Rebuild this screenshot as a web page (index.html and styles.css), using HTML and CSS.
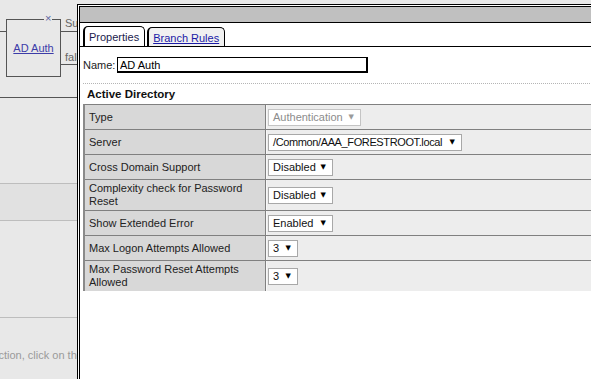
FILE: index.html
```html
<!DOCTYPE html>
<html lang="en">
<head>
    <meta charset="UTF-8">
    <meta name="viewport" content="width=device-width, initial-scale=1.0">
    <title>AD Auth Properties</title>
    <link rel="stylesheet" href="styles.css">
</head>
<body>
<div class="page">
    <aside class="workspace">
        <div class="canvas">
            <span class="wire wire-in"></span>
            <div class="node">
                <span class="node-close">&times;</span>
                <a href="#">AD Auth</a>
            </div>
            <span class="wire wire-ok"></span>
            <span class="branch branch-ok">Successful</span>
            <span class="wire wire-fail"></span>
            <span class="branch branch-fail">fallback</span>
        </div>
        <div class="band"></div>
        <div class="hint">To add an action, click on the plus sign</div>
    </aside>

    <section class="dialog">
        <div class="dialog-title"></div>

        <ul class="tabs">
            <li class="tab active">Properties</li>
            <li class="tab"><a href="#">Branch Rules</a></li>
        </ul>

        <div class="name-row">
            <label for="name">Name:</label>
            <input type="text" id="name" value="AD Auth">
        </div>

        <div class="section">
            <h2>Active Directory</h2>
            <table class="props">
                <tr>
                    <td class="label">Type</td>
                    <td class="value"><span class="select disabled w-type">Authentication <i>&#9660;</i></span></td>
                </tr>
                <tr>
                    <td class="label">Server</td>
                    <td class="value"><span class="select w-server"><b>/Common/AAA_FORESTROOT.local</b> <i>&#9660;</i></span></td>
                </tr>
                <tr>
                    <td class="label">Cross Domain Support</td>
                    <td class="value"><span class="select w-state">Disabled <i>&#9660;</i></span></td>
                </tr>
                <tr class="tall">
                    <td class="label">Complexity check for Password Reset</td>
                    <td class="value"><span class="select w-state">Disabled <i>&#9660;</i></span></td>
                </tr>
                <tr>
                    <td class="label">Show Extended Error</td>
                    <td class="value"><span class="select w-state">Enabled <i>&#9660;</i></span></td>
                </tr>
                <tr>
                    <td class="label">Max Logon Attempts Allowed</td>
                    <td class="value"><span class="select w-num">3 <i>&#9660;</i></span></td>
                </tr>
                <tr class="tall last">
                    <td class="label">Max Password Reset Attempts Allowed</td>
                    <td class="value"><span class="select w-num">3 <i>&#9660;</i></span></td>
                </tr>
            </table>
        </div>
    </section>
</div>
</body>
</html>
```

FILE: styles.css
```css
body {
  margin: 0;
  background-color: #e8e8e8;
  font-family: "Liberation Sans", Arial, sans-serif;
  font-size: 11px;
  color: #222;
  overflow: hidden;
}

.page {
  display: flex;
  height: 379px;
  overflow: hidden;
}

/* workflow area behind the dialog */
.workspace {
  width: 77px;
  flex: none;
  overflow: hidden;
}

.canvas {
  position: relative;
  height: 98px;
  box-sizing: border-box;
  border-bottom: 1px solid #555;
}

.wire {
  position: absolute;
  height: 1px;
  background-color: #555;
}

.wire-in { left: 0; top: 31px; width: 6px; }
.wire-ok { left: 61px; top: 31px; width: 20px; }
.wire-fail { left: 61px; top: 64px; width: 20px; }

.node {
  position: absolute;
  left: 6px;
  top: 19px;
  width: 55px;
  height: 58px;
  box-sizing: border-box;
  border: 1px solid #555;
  display: flex;
  align-items: center;
  justify-content: center;
}

.node a {
  color: #3c3ca8;
  font-size: 11px;
}

.node-close {
  position: absolute;
  top: -8px;
  left: 37px;
  color: #5c66a0;
  font-size: 11px;
  line-height: 13px;
  background-color: #e8e8e8;
  padding: 0 1px;
}

.branch {
  position: absolute;
  left: 65px;
  color: #666;
  line-height: 13px;
  white-space: nowrap;
}

.branch-ok { top: 17px; }
.branch-fail { top: 51px; }

.band {
  margin-top: 85px;
  height: 36px;
  background-color: #e1e1e1;
  border-top: 1px solid #bdbdbd;
  border-bottom: 1px solid #bdbdbd;
}

.hint {
  margin-top: 96px;
  border-top: 1px solid #bdbdbd;
  padding-top: 31px;
  color: #9a9a9a;
  white-space: nowrap;
  text-indent: -59px;
}

/* properties dialog */
.dialog {
  flex: none;
  width: 560px;
  height: 420px;
  margin-top: 4px;
  border: 3px double #000;
  border-right: none;
  background-color: #fff;
}

.dialog-title {
  height: 15px;
  background-color: #c0c0c0;
  border-bottom: 1px solid #000;
}

.tabs {
  display: flex;
  align-items: flex-start;
  gap: 2px;
  list-style: none;
  margin: 0;
  padding: 3px 0 0 3px;
  border-bottom: 1px solid #000;
}

.tab {
  border: 1px solid #000;
  border-left-width: 2px;
  border-bottom: none;
  border-radius: 5px 5px 0 0;
  padding: 3px 5px 0 4px;
  line-height: 15px;
  background-color: #f1f1f1;
  margin-top: 1px;
}

.tab a {
  color: #1a1aa6;
}

.tab.active {
  margin-top: 0;
  margin-bottom: -1px;
  padding-bottom: 1px;
  background-color: #fff;
  color: #1b1b4d;
}

.name-row {
  display: flex;
  align-items: center;
  margin: 10px 0 0 3px;
}

.name-row label {
  width: 34px;
}

.name-row input {
  width: 251px;
  height: 16px;
  box-sizing: border-box;
  border: 1px solid #000;
  border-right-width: 2px;
  border-bottom-width: 2px;
  padding: 0 2px;
  font-family: "Liberation Sans", Arial, sans-serif;
  font-size: 11px;
  color: #000;
}

.section {
  margin: 10px 0 0 3px;
  border-top: 1px dotted #b5b5b5;
}

.section h2 {
  margin: 4px 0 3px 4px;
  font-size: 11.5px;
  line-height: 13px;
  color: #111;
}

.props {
  width: 600px;
  border-collapse: separate;
  border-spacing: 0;
  border-top: 1px solid #808080;
  border-left: 2px solid #8a8a8a;
}

.props td {
  height: 24px;
  padding: 0;
  border-bottom: 1px solid #808080;
  vertical-align: middle;
  line-height: 13px;
}

.props tr.tall td {
  height: 30px;
}

.props tr.last td {
  border-bottom: none;
}

.props td.label {
  width: 176px;
  padding-left: 4px;
  background-color: #d8d8d8;
  border-right: 1px solid #808080;
}

.props td.value {
  padding-left: 2px;
  background-color: #ededed;
  box-shadow: inset 1px 0 #f8f8f8;
}

.select {
  display: inline-flex;
  align-items: center;
  justify-content: space-between;
  height: 17px;
  box-sizing: border-box;
  padding: 0 6px 0 4px;
  border: 1px solid #a8a8a8;
  background-color: #fff;
  color: #111;
  white-space: nowrap;
  vertical-align: middle;
}

.select b {
  font-weight: normal;
  letter-spacing: -0.38px;
}

.select i {
  font-style: normal;
  font-family: "DejaVu Sans", sans-serif;
  font-size: 7px;
  color: #000;
}

.select.disabled {
  color: #8c8c8c;
  border-color: #c4c4c4;
}

.select.disabled i {
  color: #9a9a9a;
}

.w-type { width: 93px; }
.w-server { width: 194px; }
.w-state { width: 65px; }
.w-num { width: 30px; }
```
